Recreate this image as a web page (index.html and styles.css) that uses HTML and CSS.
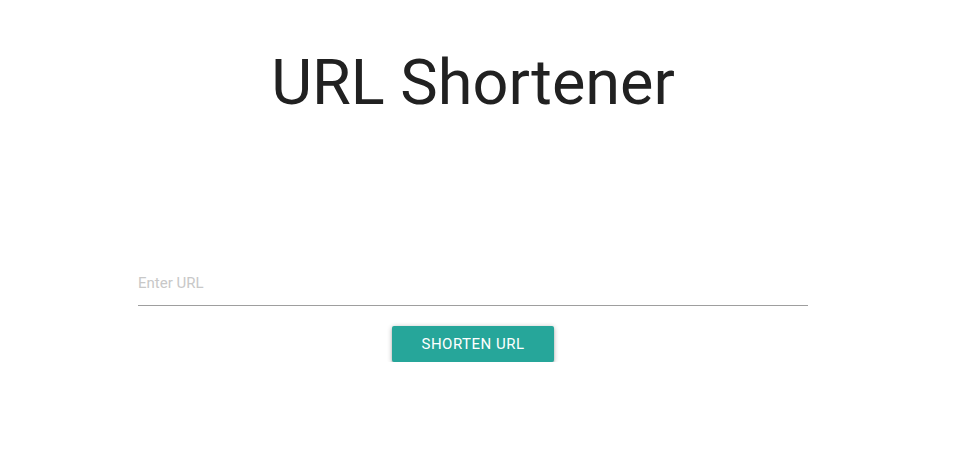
FILE: index.html
```html
<!DOCTYPE html>
<html>
<head>
<meta charset="utf-8">
<link rel="stylesheet" href="styles.css">
<title>URL Shortener</title>
</head>
<body>
<main class="page">
  <h1 class="title">URL Shortener</h1>
  <form class="form">
    <input class="url-input" type="text" placeholder="Enter URL">
    <button class="btn" type="button">SHORTEN URL</button>
  </form>
</main>
</body>
</html>
```
FILE: styles.css
```css
html, body {
  margin: 0;
  padding: 0;
  background: #fff;
}
body {
  font-family: Roboto, "Noto Sans", sans-serif;
  color: rgba(0,0,0,0.87);
}
.page {
  width: 670px;
  margin-left: 138px;
  display: flex;
  flex-direction: column;
  align-items: center;
}
.title {
  margin: 38px 0 0;
  font-size: 63px;
  font-weight: 400;
  line-height: 89px;
  color: #212121;
}
.form {
  margin-top: 135px;
  width: 100%;
  display: flex;
  flex-direction: column;
  align-items: center;
}
.url-input {
  box-sizing: content-box;
  width: 100%;
  height: 41px;
  padding: 0 0 2px;
  margin: 0 0 20px;
  border: none;
  border-bottom: 1px solid #9e9e9e;
  outline: none;
  font-family: Roboto, sans-serif;
  font-size: 15px;
  background: transparent;
}
.url-input::placeholder {
  color: #c8c8c8;
}
.btn {
  height: 36px;
  padding: 0 29px;
  border: none;
  border-radius: 2px;
  background: #26a69a;
  color: #fff;
  font-family: Roboto, sans-serif;
  font-size: 15px;
  font-weight: 400;
  letter-spacing: 0.5px;
  box-shadow: 0 2px 2px 0 rgba(0,0,0,0.14), 0 3px 1px -2px rgba(0,0,0,0.2), 0 1px 5px 0 rgba(0,0,0,0.3);
  cursor: pointer;
}
```
